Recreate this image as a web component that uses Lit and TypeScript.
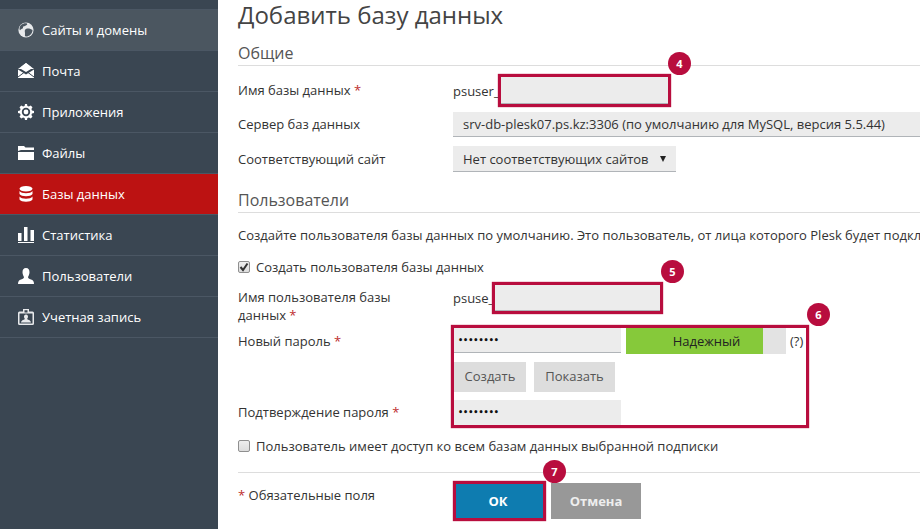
import { LitElement, html, css, svg } from "lit";
import { customElement } from "lit/decorators.js";

const icons: Record<string, unknown> = {
  globe: svg`<circle cx="8" cy="8" r="7.6" fill="#e8eaec"/><path d="M3 3c2-1.500 4-2 6-1.500 1 1-1 2-2 2.500-1 .5-2.500 0-2 1.500.5 1.500-2 1-3 3C1 7 1.500 4.500 3 3zM8 7c2-1 5 0 6.500 1 0 2-1 4-3 5.500-1 .5-2 1-3.500 1-1.500 0-1-2-1-3 0-2-1-3.500 1-4.500z" fill="#4b5660"/>`,
  mail: svg`<path d="M8 0 13 4v2L8 9 3 6V4zM0 6.500 8 11.500 16 6.500V15H0z" fill="#fff"/><path d="M0 6 8 0l8 6-3 0-5-3-5 3z" fill="#fff"/><path d="M0 14 6 9.500M16 14 10 9.500" stroke="#3a4652" fill="none"/>`,
  gear: svg`<path d="M7 0h2l.4 2 1.500.6L12.700 1.500 14.500 3.300 13.400 5l.6 1.500 2 .5v2l-2 .4-.6 1.500 1.100 1.800-1.800 1.800-1.800-1.100-1.500.6-.4 2H7l-.4-2-1.500-.6-1.800 1.100L1.500 12.700 2.600 11 2 9.400 0 9V7l2-.5L2.600 5 1.500 3.300 3.300 1.500 5.100 2.600 6.600 2z" fill="#fff"/><circle cx="8" cy="8" r="4.200" fill="#3a4652"/><circle cx="8" cy="8" r="2.400" fill="#fff"/>`,
  folder: svg`<path d="M0 1h6l1.500 1.500H16V5H3L0 6z" fill="#fff"/><path d="M0 7h16v8H0z" fill="#fff"/>`,
  db: svg`<ellipse cx="8" cy="2.800" rx="6.500" ry="2.800" fill="#fff"/><path d="M1.500 5c1 1.500 3.500 2.200 6.500 2.200S13.500 6.500 14.500 5v3c-1 1.500-3.500 2.200-6.500 2.200S2.500 9.500 1.500 8zM1.500 10.500c1 1.500 3.500 2.200 6.500 2.200s5.500-.7 6.500-2.200v3c-1 1.500-3.500 2.200-6.500 2.200s-5.500-.7-6.500-2.200z" fill="#fff"/>`,
  chart: svg`<path d="M0 6h3.500v8H0zM6 0h3.500v14H6zM12.500 3H16v11h-3.500zM0 15h16v1H0z" fill="#fff"/>`,
  user: svg`<path d="M8 0c2.500 0 3.500 2 3.500 4.200S10.500 8 10 9c0 1.200 1 1.800 3 2.500S16 13 16 16H0c0-3 1-3.800 3-4.500S6 10.200 6 9c-.5-1-1.500-2.600-1.500-4.800S5.500 0 8 0z" fill="#fff"/>`,
  account: svg`<path d="M5 0h6v2.500h3.500A1.500 1.500 0 0 1 16 4v10.500A1.500 1.500 0 0 1 14.500 16h-13A1.500 1.500 0 0 1 0 14.500V4a1.500 1.500 0 0 1 1.500-1.500H5z" fill="#e8eaec"/><path d="M1.500 4.500h13v10h-13z" fill="#3a4652"/><path d="M6.500 1.200h3v2.300h-3z" fill="#3a4652"/><path d="M8 5.500c1.500 0 2 1.200 2 2.200s-.8 1.800-.8 2.300c0 .6 3.300.8 3.800 3.500H3c.5-2.700 3.800-2.900 3.800-3.500 0-.5-.8-1.300-.8-2.300s.5-2.200 2-2.200z" fill="#e8eaec"/>`,
};

const nav: [string, string, string][] = [
  ["globe", "Сайты и домены", "first"],
  ["mail", "Почта", ""],
  ["gear", "Приложения", ""],
  ["folder", "Файлы", ""],
  ["db", "Базы данных", "active"],
  ["chart", "Статистика", ""],
  ["user", "Пользователи", ""],
  ["account", "Учетная запись", ""],
];

@customElement("app-root")
export class AppRoot extends LitElement {
  static styles = css`
    :host { display: block; width: 920px; height: 529px; overflow: hidden; background: #fff;
      font-family: "Open Sans", sans-serif; font-size: 13px; color: #333; }
    * { box-sizing: border-box; }
    .page { display: flex; height: 529px; width: 920px; overflow: hidden; }
    .side { flex: 0 0 218px; background: #3a4652; padding-top: 9px; }
    .item { height: 41px; display: flex; align-items: center; gap: 8px; padding-left: 18px; color: #fff;
      border-bottom: 1px solid #4b5764; font-size: 13px; }
    .item.first { height: 42px; background: #4b5660; border-top: 1px solid #4b5764; }
    .item.active { background: #bc1212; border-bottom-color: #4b5764; }
    .item svg { width: 16px; height: 16px; flex: none; }
    .main { flex: 1; min-width: 0; position: relative; padding-left: 20px; overflow: hidden; }
    h1 { margin: 0; font-size: 24px; font-weight: 400; line-height: 30px; color: #444; height: 30px; white-space: nowrap; }
    h2 { margin: 0; font-size: 16px; font-weight: 400; line-height: 22px; color: #555; height: 24px;
      border-bottom: 1px solid #ddd; white-space: nowrap; }
    h2.gen { margin-top: 12px; }
    h2.usr { margin-top: 17px; }
    .row { display: grid; grid-template-columns: 215px 1fr; }
    .lab { color: #333; }
    .req { color: #bd2d2d; }
    .r1 { margin-top: 8px; height: 33px; align-items: center; }
    .r2 { margin-top: 5px; height: 25px; align-items: center; }
    .r1 .lab, .r2 .lab { padding-bottom: 2px; }
    .r3 { margin-top: 9px; height: 26px; align-items: center; }
    .ctl { display: flex; align-items: center; min-width: 0; }
    .pre { white-space: nowrap; color: #333; }
    .box { border: 3px solid #b80d3e; box-shadow: 0 0 1px #b80d3e; background: #ececec; position: relative; flex: none; }
    .box::after { content: ""; position: absolute; left: 0; right: 0; bottom: 0; height: 1px; background: #b0b4b8; }
    .box1 { width: 173px; height: 33px; }
    .box2 { width: 171px; height: 32px; }
    .psu { width: 45px; }
    .psn { width: 39px; }
    .sel { background: #ececec; border-bottom: 1px solid #b0b4b8; display: flex; align-items: center;
      padding-left: 10px; white-space: nowrap; overflow: hidden; }
    .sel.wide { width: 467px; height: 25px; }
    .sel.small { width: 223px; height: 26px; position: relative; }
    .arr { position: absolute; left: 207px; top: 10px; width: 0; height: 0; border-left: 3.500px solid transparent;
      border-right: 3.500px solid transparent; border-top: 6px solid #222; }
    .desc { margin-top: 13px; height: 18px; line-height: 18px; white-space: nowrap; color: #333; font-size: 13px; }
    .chk { display: flex; align-items: center; gap: 6px; height: 18px; white-space: nowrap; }
    .cb { width: 12px; height: 12px; flex: none; border: 1px solid #8f8f8f; border-radius: 2px; background: linear-gradient(#eee, #ddd); display: block; margin-left: 0; }
    .cb svg { display: block; width: 10px; height: 10px; }
    .c1 { margin-top: 14px; }
    .r4 { margin-top: 6px; height: 32px; align-items: start; }
    .r4 .lab { line-height: 18px; margin-top: 6px; width: 180px; }
    .r4 .ctl { height: 32px; }
    .r5 { margin-top: 14px; height: 26px; }
    .r5 .lab { line-height: 26px; }
    .pw { background: #ececec; height: 25px; border-bottom: 1px solid #b0b4b8; width: 168px; padding: 1px 0 0 5px; line-height: 24px;
      font-size: 8px; color: #111; font-family: "DejaVu Sans", sans-serif; font-weight: 700; flex: none; }
    .r5 .ctl { align-items: flex-start; }
    .pw.plain { border-bottom: none; }
    .meter { margin-left: 5px; width: 160px; height: 26px; background: #e3e3e3; flex: none; }
    .fill { width: 137px; height: 26px; background: #86c93a; color: #222; text-align: center; line-height: 26px; font-size: 13px; padding-left: 24px; }
    .q { margin-left: 4px; font-size: 13px; line-height: 26px; color: #333; }
    .btns { margin-top: 8px; height: 30px; display: flex; gap: 8px; margin-left: 216px; }
    .btn { height: 30px; padding-bottom: 2px; background: #dddddd; color: #555; display: flex; align-items: center; justify-content: center; font-size: 13px; }
    .b1 { width: 72px; }
    .b2 { width: 81px; }
    .r6 { margin-top: 8px; height: 25px; }
    .r6 .lab { line-height: 25px; }
    .c2 { margin-top: 12px; }
    hr { border: 0; border-top: 1px solid #ddd; margin: 17px 0 0; height: 0; }
    .foot { display: grid; grid-template-columns: 215px auto auto 1fr; }
    .foot .lab { margin-top: 13px; line-height: 18px; }
    .ok { margin-top: 8px; width: 93px; height: 40px; padding-right: 3px; background: #0e7cb0; border: 3px solid #b80d3e; box-shadow: 0 0 1px #b80d3e;
      color: #fff; font-weight: 700; display: flex; align-items: center; justify-content: center; font-size: 13px; }
    .cancel { margin-top: 10px; margin-left: 5px; width: 90px; height: 36px; background: #989898; color: #eee; font-weight: 700;
      display: flex; align-items: center; justify-content: center; font-size: 13px; }
    .mark { position: absolute; width: 23px; height: 23px; border-radius: 50%; background: #b80d3e; color: #fff; font-weight: 700;
      font-size: 11px; display: flex; align-items: center; justify-content: center; }
    .frame { position: absolute; left: 233px; top: 325px; width: 358px; height: 103px; border: 3px solid #b80d3e; box-shadow: 0 0 1px #b80d3e; }
  `;

  private mark(n: string, x: number, y: number) {
    return html`<div class="mark" style="left:${x - 218}px;top:${y}px">${n}</div>`;
  }

  render() {
    return html`<div class="page">
      <nav class="side">
        ${nav.map(([i, t, c]) => html`<div class="item ${c}"><svg viewBox="0 0 16 16">${icons[i]}</svg><span>${t}</span></div>`)}
      </nav>
      <main class="main">
        <h1>Добавить базу данных</h1>
        <h2 class="gen">Общие</h2>
        <div class="row r1"><div class="lab">Имя базы данных <span class="req">*</span></div>
          <div class="ctl"><span class="pre psu">psuser_</span><div class="box box1"></div></div></div>
        <div class="row r2"><div class="lab">Сервер баз данных</div>
          <div class="ctl"><div class="sel wide">srv-db-plesk07.ps.kz:3306 (по умолчанию для MySQL, версия 5.5.44)</div></div></div>
        <div class="row r3"><div class="lab">Соответствующий сайт</div>
          <div class="ctl"><div class="sel small">Нет соответствующих сайтов<span class="arr"></span></div></div></div>
        <h2 class="usr">Пользователи</h2>
        <div class="desc">Создайте пользователя базы данных по умолчанию. Это пользователь, от лица которого Plesk будет подключаться к базе данных.</div>
        <div class="chk c1"><span class="cb"><svg viewBox="0 0 10 10"><path d="M1.500 5 4 8 8.500 1.500" fill="none" stroke="#333" stroke-width="2"/></svg></span>Создать пользователя базы данных</div>
        <div class="row r4"><div class="lab">Имя пользователя базы данных <span class="req">*</span></div>
          <div class="ctl"><span class="pre psn">psuse_</span><div class="box box2"></div></div></div>
        <div class="row r5"><div class="lab">Новый пароль <span class="req">*</span></div>
          <div class="ctl"><div class="pw">••••••••</div><div class="meter"><div class="fill">Надежный</div></div><span class="q">(?)</span></div></div>
        <div class="btns"><div class="btn b1">Создать</div><div class="btn b2">Показать</div></div>
        <div class="row r6"><div class="lab">Подтверждение пароля <span class="req">*</span></div>
          <div class="ctl"><div class="pw plain">••••••••</div></div></div>
        <div class="chk c2"><span class="cb"></span>Пользователь имеет доступ ко всем базам данных выбранной подписки</div>
        <hr />
        <div class="foot"><div class="lab"><span class="req">*</span> Обязательные поля</div>
          <div class="ok">ОК</div><div class="cancel">Отмена</div></div>
        <div class="frame"></div>
        ${this.mark("4", 668, 52)}${this.mark("5", 661, 260)}${this.mark("6", 807, 303)}${this.mark("7", 543, 460)}
      </main>
    </div>`;
  }
}
